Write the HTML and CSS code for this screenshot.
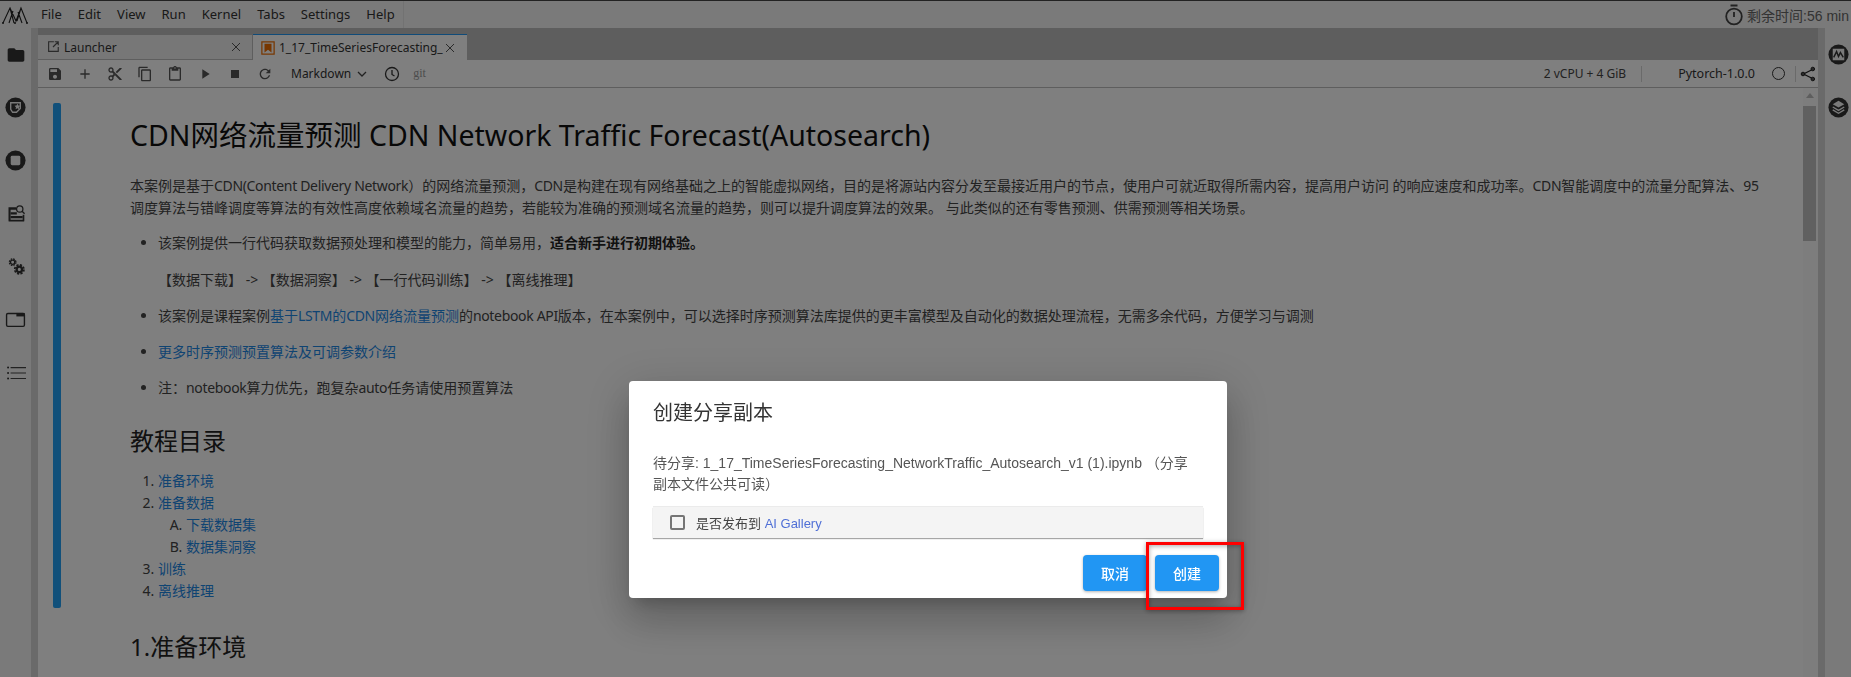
FILE: index.html
```html
<!DOCTYPE html>
<html lang="zh">
<head>
<meta charset="utf-8">
<title>CDN Network Traffic Forecast</title>
<link rel="stylesheet" href="styles.css">
</head>
<body>
<div class="app">
  <header class="menubar">
    <svg class="logo" viewBox="0 0 26 18"><path d="M1 17 L8 2 L14 15 L19 2 L25 17 M7 17 L11 5 M8 2 L12 17 M20 17 L16 6 M19 2 L15 15" fill="none" stroke="#222" stroke-width="1.100"/><circle cx="1" cy="17" r="1" fill="#222"/><circle cx="13" cy="17" r="1" fill="#222"/><circle cx="25" cy="17" r="1" fill="#222"/></svg>
    <nav class="menu">
      <span class="menu-item">File</span><span class="menu-item">Edit</span><span class="menu-item">View</span><span class="menu-item">Run</span><span class="menu-item">Kernel</span><span class="menu-item">Tabs</span><span class="menu-item">Settings</span><span class="menu-item">Help</span>
    </nav>
    <div class="timer">
      <svg class="timer-icon" viewBox="0 0 20 22"><path d="M6.500 1.500h7" stroke="#444" stroke-width="2" fill="none"/><circle cx="10" cy="12.500" r="7.800" fill="none" stroke="#444" stroke-width="1.800"/><path d="M10 8v5" stroke="#444" stroke-width="1.800"/></svg>
      <span>剩余时间:56 min</span>
    </div>
  </header>
  <div class="workspace">
    <aside class="side side-left">
      <svg class="side-icon side-icon-small" viewBox="0 0 24 24"><path d="M10 4H4c-1.100 0-2 .9-2 2v12c0 1.100.9 2 2 2h16c1.100 0 2-.9 2-2V8c0-1.100-.9-2-2-2h-8l-2-2z"/></svg>
      <svg class="side-icon" viewBox="0 0 24 24"><circle cx="12" cy="12" r="10.500"/><path d="M7 7h10v6l-4 4H9l-2-3z" fill="none" stroke="#f5f5f5" stroke-width="1.400"/><path d="M14 8l1 2 2 .3-1.500 1.400.4 2-1.900-1-1.900 1 .4-2L11 10.300l2-.3z" fill="#f5f5f5"/></svg>
      <svg class="side-icon" viewBox="0 0 24 24"><circle cx="12" cy="12" r="10.500"/><rect x="7" y="7" width="10" height="10" rx="1.500" fill="#f5f5f5"/></svg>
      <svg class="side-icon side-icon-small" viewBox="0 0 24 24"><path d="M3 4h9v3H5.500v12H20v-6h2v7a1 1 0 0 1-1 1H4a1 1 0 0 1-1-1z"/><path d="M5.500 10H13v2.500H5.500zM5.500 14.500H20V17H5.500z"/><circle cx="16.500" cy="6" r="3.800" fill="none" stroke="#333" stroke-width="1.500"/><path d="M19.300 8.800l3 3" stroke="#333" stroke-width="1.600"/></svg>
      <svg class="side-icon" viewBox="0 0 24 24"><circle cx="9" cy="7.500" r="2.200" fill="none" stroke="#333" stroke-width="1.400"/><circle cx="9" cy="7.500" r="3.400" fill="none" stroke="#333" stroke-width="1.400" stroke-dasharray="1.700 1"/><circle cx="16" cy="15" r="2.800" fill="none" stroke="#333" stroke-width="2.400"/><circle cx="16" cy="15" r="4.800" fill="none" stroke="#333" stroke-width="1.800" stroke-dasharray="2.300 1.470"/></svg>
      <svg class="side-icon side-icon-wide" viewBox="0 0 24 24"><rect x="1.800" y="5.200" width="20.400" height="14.600" rx="1.500" fill="none" stroke="#333" stroke-width="1.600"/><path d="M13 4.500h9.500v4H13z"/></svg>
      <svg class="side-icon side-icon-small" viewBox="0 0 24 24"><path d="M5.500 5.500H24M5.500 12H24M5.500 18.500H24" stroke="#444" stroke-width="1.300" fill="none"/><circle cx="2.500" cy="5.500" r="1.200" fill="#333"/><circle cx="2.500" cy="12" r="1.200" fill="#333"/><circle cx="2.500" cy="18.500" r="1.200" fill="#333"/></svg>
    </aside>
    <main class="main">
      <div class="tabbar">
        <div class="tab">
          <svg class="tab-icon" viewBox="0 0 16 16"><path d="M9 2H3v11h11V8M8 8l6-6M10 2h4v4" fill="none" stroke="#555" stroke-width="1.300"/></svg>
          <span class="tab-label">Launcher</span>
          <svg class="tab-close" viewBox="0 0 12 12"><path d="M2 2l8 8M10 2l-8 8" stroke="#555" stroke-width="1"/></svg>
        </div>
        <div class="tab tab-active">
          <svg class="tab-icon" viewBox="0 0 16 16"><rect x="1" y="1" width="14" height="14" fill="none" stroke="#ef6c00" stroke-width="1.400"/><path d="M4 3h8v10l-4-3-4 3z" fill="#ef6c00"/></svg>
          <span class="tab-label">1_17_TimeSeriesForecasting_</span>
          <svg class="tab-close" viewBox="0 0 12 12"><path d="M2 2l8 8M10 2l-8 8" stroke="#555" stroke-width="1"/></svg>
        </div>
      </div>
      <div class="toolbar">
        <svg class="tool" viewBox="0 0 24 24"><path d="M17 3H5c-1.110 0-2 .9-2 2v14c0 1.100.89 2 2 2h14c1.100 0 2-.9 2-2V7l-4-4zm-5 16c-1.660 0-3-1.340-3-3s1.340-3 3-3 3 1.340 3 3-1.340 3-3 3zm3-10H5V5h10v4z"/></svg>
        <svg class="tool" viewBox="0 0 24 24"><path d="M19 13h-6v6h-2v-6H5v-2h6V5h2v6h6v2z"/></svg>
        <svg class="tool" viewBox="0 0 24 24"><path d="M9.640 7.640c.23-.5.36-1.050.36-1.640 0-2.210-1.790-4-4-4S2 3.790 2 6s1.790 4 4 4c.59 0 1.140-.13 1.640-.36L10 12l-2.360 2.360C7.140 14.130 6.590 14 6 14c-2.210 0-4 1.790-4 4s1.790 4 4 4 4-1.790 4-4c0-.59-.13-1.140-.36-1.640L12 14l7 7h3v-1L9.640 7.640zM6 8c-1.100 0-2-.89-2-2s.9-2 2-2 2 .89 2 2-.9 2-2 2zm0 12c-1.100 0-2-.89-2-2s.9-2 2-2 2 .89 2 2-.9 2-2 2zm6-7.500c-.28 0-.5-.22-.5-.5s.22-.5.5-.5.5.22.5.5-.22.5-.5.5zM19 3l-6 6 2 2 7-7V3z"/></svg>
        <svg class="tool" viewBox="0 0 24 24"><path d="M16 1H4c-1.100 0-2 .9-2 2v14h2V3h12V1zm3 4H8c-1.100 0-2 .9-2 2v14c0 1.100.9 2 2 2h11c1.100 0 2-.9 2-2V7c0-1.100-.9-2-2-2zm0 16H8V7h11v14z"/></svg>
        <svg class="tool" viewBox="0 0 24 24"><path d="M19 2h-4.180C14.400.84 13.300 0 12 0c-1.300 0-2.400.84-2.820 2H5c-1.100 0-2 .9-2 2v16c0 1.100.9 2 2 2h14c1.100 0 2-.9 2-2V4c0-1.100-.9-2-2-2zm-7 0c.55 0 1 .45 1 1s-.45 1-1 1-1-.45-1-1 .45-1 1-1zm7 18H5V4h2v3h10V4h2v16z"/></svg>
        <svg class="tool" viewBox="0 0 24 24"><path d="M8 5v14l11-7z"/></svg>
        <svg class="tool" viewBox="0 0 24 24"><path d="M6 6h12v12H6z"/></svg>
        <svg class="tool" viewBox="0 0 24 24"><path d="M17.650 6.350C16.200 4.900 14.210 4 12 4c-4.420 0-7.990 3.580-7.990 8s3.570 8 7.990 8c3.730 0 6.840-2.550 7.730-6h-2.080c-.82 2.330-3.040 4-5.650 4-3.310 0-6-2.690-6-6s2.690-6 6-6c1.660 0 3.140.69 4.220 1.780L13 11h7V4l-2.350 2.350z"/></svg>
        <span class="celltype">Markdown</span>
        <svg class="chevron" viewBox="0 0 12 12"><path d="M2 4l4 4 4-4" fill="none" stroke="#444" stroke-width="1.300"/></svg>
        <svg class="clock" viewBox="0 0 16 16"><circle cx="8" cy="8" r="6.500" fill="none" stroke="#333" stroke-width="1.300"/><path d="M8 4v4.500l2.500 1.500" fill="none" stroke="#333" stroke-width="1.300"/></svg>
        <span class="git">git</span>
        <span class="resources">2 vCPU + 4 GiB</span>
        <span class="tool-sep"></span>
        <span class="kernel">Pytorch-1.0.0</span>
        <span class="kernel-state"></span>
        <span class="tool-sep tool-sep-small"></span>
        <svg class="share" viewBox="0 0 16 16"><path d="M12.500 3.500L3.500 8l9 4.500" fill="none" stroke="#222" stroke-width="1.300"/><circle cx="12.800" cy="3" r="1.800" fill="#555" stroke="#222"/><circle cx="3" cy="8" r="1.800" fill="#555" stroke="#222"/><circle cx="12.800" cy="13" r="1.800" fill="#555" stroke="#222"/></svg>
      </div>
      <div class="notebook">
        <div class="content">
          <div class="cell">
            <span class="cell-bar"></span>
            <div class="cell-body">
              <h1 class="title">CDN网络流量预测 CDN Network Traffic Forecast(Autosearch)</h1>
              <p class="para">本案例是基于<span class="lat">CDN(Content Delivery Network</span>）的网络流量预测，<span class="lat">CDN</span>是构建在现有网络基础之上的智能虚拟网络，目的是将源站内容分发至最接近用户的节点，使用户可就近取得所需内容，提高用户访问 的响应速度和成功率。<span class="lat">CDN</span>智能调度中的流量分配算法、<span class="lat">95</span><br>调度算法与错峰调度等算法的有效性高度依赖域名流量的趋势，若能较为准确的预测域名流量的趋势，则可以提升调度算法的效果。 与此类似的还有零售预测、供需预测等相关场景。</p>
              <ul class="bullets">
                <li>该案例提供一行代码获取数据预处理和模型的能力，简单易用，<strong>适合新手进行初期体验。</strong>
                  <p class="flow">【数据下载】 -&gt; 【数据洞察】 -&gt; 【一行代码训练】 -&gt; 【离线推理】</p>
                </li>
                <li>该案例是课程案例<a class="link">基于<span class="lat">LSTM</span>的<span class="lat">CDN</span>网络流量预测</a>的<span class="lat">notebook API</span>版本，在本案例中，可以选择时序预测算法库提供的更丰富模型及自动化的数据处理流程，无需多余代码，方便学习与调测</li>
                <li><a class="link">更多时序预测预置算法及可调参数介绍</a></li>
                <li>注：<span class="lat">notebook</span>算力优先，跑复杂<span class="lat">auto</span>任务请使用预置算法</li>
              </ul>
              <h2 class="heading">教程目录</h2>
              <ol class="toc">
                <li><a class="link">准备环境</a></li>
                <li><a class="link">准备数据</a>
                  <ol class="toc-sub">
                    <li><a class="link">下载数据集</a></li>
                    <li><a class="link">数据集洞察</a></li>
                  </ol>
                </li>
                <li><a class="link">训练</a></li>
                <li><a class="link">离线推理</a></li>
              </ol>
            </div>
          </div>
          <h2 class="heading heading-next">1.准备环境</h2>
        </div>
        <div class="scrollbar">
          <span class="scroll-up"></span>
          <span class="scroll-thumb"></span>
        </div>
      </div>
    </main>
    <aside class="side side-right">
      <svg class="side-icon" viewBox="0 0 24 24"><circle cx="12" cy="12" r="10.500"/><rect x="6" y="6" width="12" height="12" fill="#f5f5f5"/><path d="M7 15l3-6 2 5 2-4 3 5" fill="none" stroke="#333" stroke-width="1.500"/></svg>
      <svg class="side-icon" viewBox="0 0 24 24"><circle cx="12" cy="12" r="10.500"/><path d="M12 5l6 3.500-6 3.500-6-3.500z" fill="#f5f5f5"/><path d="M6 11.500l6 3.500 6-3.500M6 14.500l6 3.500 6-3.500" fill="none" stroke="#f5f5f5" stroke-width="1.400"/></svg>
    </aside>
  </div>
</div>
<div class="overlay"></div>
<section class="dialog">
  <h3 class="dialog-title">创建分享副本</h3>
  <p class="dialog-text">待分享: 1_17_TimeSeriesForecasting_NetworkTraffic_Autosearch_v1 (1).ipynb （分享副本文件公共可读）</p>
  <div class="publish">
    <span class="checkbox"></span>
    <span class="publish-label">是否发布到 <a class="gallery">AI Gallery</a></span>
  </div>
  <div class="actions">
    <button class="btn">取消</button>
    <button class="btn">创建</button>
  </div>
</section>
<div class="callout"></div>
</body>
</html>
```
FILE: styles.css
```css
* { box-sizing: border-box; }
html, body { margin: 0; height: 100%; overflow: hidden; }
body {
  font-family: "Noto Sans", "Noto Sans CJK SC", sans-serif;
  color: #333;
  background: #fff;
}
.app { display: flex; flex-direction: column; width: 1851px; height: 677px; }

.menubar {
  display: flex; align-items: center; height: 28px; flex: none;
  background: #f5f5f5; border-top: 1px solid #444;
}
.logo { width: 26px; height: 18px; margin-left: 2px; flex: none; }
.menu { display: flex; height: 27px; align-items: center; border-right: 1px solid #e4e4e4; margin-left: 5px; }
.menu-item { font-size: 13px; padding: 0 8px; line-height: 27px; color: #333; }
.timer { margin-left: auto; display: flex; align-items: center; gap: 3px; padding-right: 2px; font-size: 14px; color: #666; font-family: "Liberation Sans", "Noto Sans CJK SC", sans-serif; }
.timer-icon { width: 20px; height: 22px; }

.workspace { display: flex; flex: 1; min-height: 0; background: #d4d4d4; }
.side {
  flex: none; background: #f5f5f5; display: grid; grid-auto-rows: 53px;
  justify-items: center; align-items: center; align-content: start;
}
.side-left { width: 31px; }
.side-right { width: 26px; margin-left: 7px; }
.side-icon { width: 23px; height: 23px; fill: #333; }
.side-icon-small { width: 20px; height: 20px; }
.side-icon-wide { width: 21px; height: 21px; }

.main { flex: none; width: 1780px; margin-left: 7px; display: flex; flex-direction: column; background: #fff; }

.tabbar { display: flex; align-items: flex-end; height: 32px; flex: none; background: #bdbdbd; }
.tab {
  display: flex; align-items: center; width: 215px; height: 25px;
  padding: 0 8px; background: #eeeeee; border-bottom: 1px solid #bdbdbd; border-right: 1px solid #bdbdbd;
  font-size: 12px; color: #333;
}
.tab-active { height: 26px; width: 214px; padding-right: 9px; background: #fff; border-top: 1px solid #2196f3; border-bottom: 0; border-right: 0; }
.tab-icon { width: 14px; height: 14px; margin-right: 4px; flex: none; }
.tab-label { flex: 1; white-space: nowrap; }
.tab-close { width: 12px; height: 12px; flex: none; margin-right: 2px; }

.toolbar {
  display: flex; align-items: center; height: 28px; flex: none;
  background: #fff; border-bottom: 1px solid #bdbdbd; padding: 0 0 0 9px;
}
.tool { width: 16px; height: 16px; fill: #555; margin-right: 14px; flex: none; }
.celltype { font-size: 12px; color: #333; margin-left: 4px; }
.chevron { width: 12px; height: 12px; margin-left: 5px; }
.clock { width: 16px; height: 16px; margin-left: 16px; }
.git { font-size: 12px; color: #999; margin-left: 13px; font-family: "Liberation Serif", serif; }
.resources { font-size: 12px; color: #444; margin-left: auto; }
.tool-sep { width: 1px; height: 16px; background: #d4d4d4; margin: 0 36px 0 15px; }
.kernel { font-size: 12.500px; color: #333; }
.kernel-state { width: 13px; height: 13px; border: 1px solid #333; border-radius: 50%; margin-left: 17px; }
.tool-sep-small { margin: 0 4px 0 10px; }
.share { width: 16px; height: 16px; margin-right: 2px; }

.notebook { flex: 1; display: flex; min-height: 0; overflow: hidden; }
.content { flex: 1; min-width: 0; padding-top: 15px; }
.cell { display: flex; align-items: stretch; margin-left: 15px; height: 505px; }
.cell-bar { width: 8px; background: #22a0f5; border-radius: 2px; flex: none; }
.cell-body { padding-left: 69px; flex: 1; min-width: 0; }
.title { margin: 14px 0 0; font-size: 28.500px; line-height: 36px; font-weight: 400; color: #111; white-space: nowrap; }
.para { margin: 22px 0 0; font-size: 14px; line-height: 22px; color: #444; white-space: nowrap; }
.lat { letter-spacing: -0.33px; }
.bullets { margin: 13px 0 0; padding-left: 28px; font-size: 14px; line-height: 22px; color: #444; }
.bullets > li { margin-bottom: 14px; }
.bullets strong { font-weight: 600; color: #222; }
.flow { margin: 15px 0 0; }
.link { color: #1e88e5; }
.heading { margin: 0; font-size: 24px; line-height: 32px; font-weight: 400; color: #222; }
.bullets + .heading { margin-top: 26px; }
.toc { margin: 13px 0 0; padding-left: 28px; font-size: 14px; line-height: 22px; color: #444; }
.toc-sub { margin: 0; padding-left: 28px; list-style-type: upper-alpha; }
.heading-next { margin: 23px 0 0 92px; }

.scrollbar { width: 15px; flex: none; padding: 5px 2px 0 0; display: flex; flex-direction: column; align-items: center; background: #fafafa; }
.scroll-up { width: 0; height: 0; border: 4px solid transparent; border-top: 0; border-bottom: 5px solid #bdbdbd; margin-bottom: 8px; }
.scroll-thumb { width: 13px; height: 135px; background: #c0c0c0; }

.overlay { position: fixed; inset: 0; background: rgba(0, 0, 0, .5); }
.dialog {
  position: fixed; left: 629px; top: 381px; width: 598px; height: 217px;
  background: #fff; border-radius: 4px; padding: 20px 24px 0;
  box-shadow: 0 11px 15px -7px rgba(0,0,0,.2), 0 24px 38px 3px rgba(0,0,0,.14), 0 9px 46px 8px rgba(0,0,0,.12);
  font-family: "Liberation Sans", "Noto Sans CJK SC", sans-serif;
}
.dialog-title { margin: 0; font-size: 20px; line-height: 24px; font-weight: 400; color: #333; }
.dialog-text { margin: 28px 8px 0 0; font-size: 14px; line-height: 21px; color: #555; }
.publish {
  display: flex; align-items: center; height: 31px; margin: 12px 0 0; padding-left: 17px;
  background: #f4f4f4; box-shadow: 0 -1px 0 rgba(0,0,0,.08), 0 1px 1px rgba(0,0,0,.35);
}
.checkbox { width: 15px; height: 15px; border: 2px solid #757575; border-radius: 2px; flex: none; }
.publish-label { margin-left: 11px; font-size: 13px; color: #444; }
.gallery { color: #4f6fd6; }
.actions { display: flex; justify-content: flex-end; gap: 8px; margin: 17px -16px 0 0; }
.btn {
  width: 64px; height: 36px; border: 0; border-radius: 4px; background: #2196f3; color: #fff;
  font: 500 14px "Noto Sans CJK SC", sans-serif;
  box-shadow: 0 1px 3px rgba(0,0,0,.3);
}
.callout {
  position: fixed; left: 1146px; top: 542px; width: 98px; height: 68px;
  border: 3px solid #f00; box-shadow: 0 1px 5px rgba(0,0,0,.35), inset 0 1px 5px rgba(0,0,0,.35);
}
```
